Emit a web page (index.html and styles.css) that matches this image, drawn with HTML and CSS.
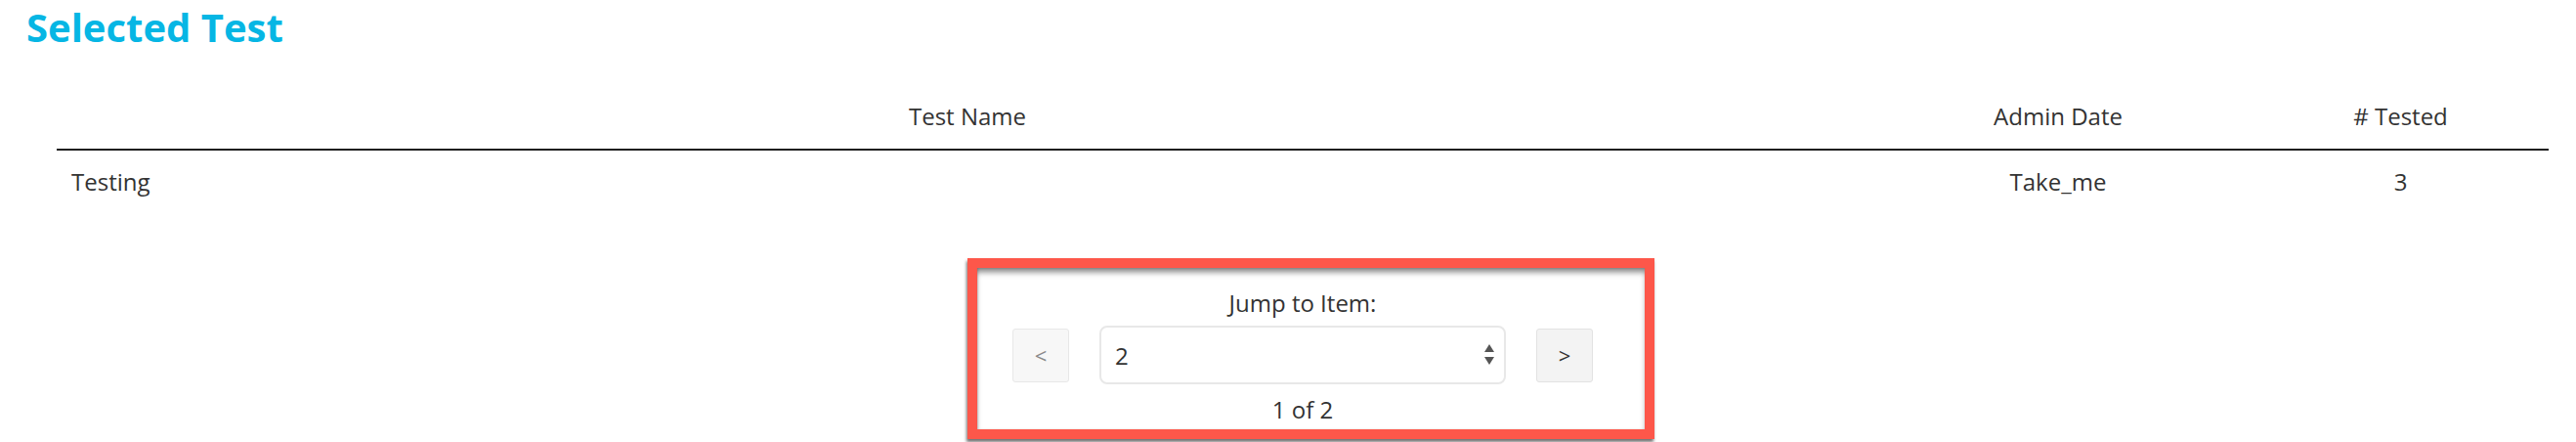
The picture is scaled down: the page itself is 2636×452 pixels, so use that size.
FILE: index.html
```html
<!DOCTYPE html>
<html lang="en">
<head>
    <meta charset="UTF-8">
    <meta name="viewport" content="width=device-width, initial-scale=1.0">
    <title>Selected Test</title>
    <link rel="stylesheet" href="styles.css">
</head>
<body>
    <div class="page">
        <h1 class="title">Selected Test</h1>

        <table class="test-table">
            <thead>
                <tr>
                    <th class="col-name">Test Name</th>
                    <th class="col-date">Admin Date</th>
                    <th class="col-count"># Tested</th>
                </tr>
            </thead>
            <tbody>
                <tr>
                    <td class="col-name left">Testing</td>
                    <td class="col-date">Take_me</td>
                    <td class="col-count">3</td>
                </tr>
            </tbody>
        </table>

        <div class="pager-wrap">
            <div class="pager">
                <!-- red annotation drawn over the pager -->
                <div class="highlight"></div>
                <div class="pager-label">Jump to Item:</div>
                <div class="pager-row">
                    <button class="nav-btn" disabled>&lt;</button>
                    <div class="select-box">
                        <span class="select-value">2</span>
                        <svg class="select-arrows" width="10" height="22" viewBox="0 0 10 22">
                            <polygon points="5,0 10,8 0,8" fill="#555"/>
                            <polygon points="0,13 10,13 5,21" fill="#555"/>
                        </svg>
                    </div>
                    <button class="nav-btn active">&gt;</button>
                </div>
                <div class="pager-count">1 of 2</div>
            </div>
        </div>
    </div>
</body>
</html>
```

FILE: styles.css
```css
body {
    margin: 0;
    padding: 0;
    background-color: #ffffff;
    font-family: "Open Sans", "Liberation Sans", sans-serif;
    color: #333333;
}
.page {
    width: 100%;
    height: 452px;
    overflow: hidden;
}
.title {
    margin: 0;
    padding: 0 0 0 27px;
    font-size: 40px;
    line-height: 56px;
    font-weight: 700;
    color: #06b6e4;
}
.test-table {
    margin: 28px 28px 0 58px;
    width: 2550px;
    border-collapse: separate;
    border-spacing: 0;
    font-size: 24px;
    line-height: 33px;
}
.test-table th {
    font-weight: 400;
    text-align: center;
    padding: 18px 15px 17px 15px;
    border-bottom: 2px solid #1e1e1e;
}
.test-table td {
    text-align: center;
    padding: 15px 15px;
}
.test-table .left {
    text-align: left;
}
.col-name {
    width: 1834px;
}
.col-date {
    width: 338px;
}
.test-table .col-count {
    padding-right: 0;
}
.pager-wrap {
    margin: 76px 28px 0 58px;
    display: flex;
    justify-content: center;
}
.pager {
    position: relative;
    display: flex;
    flex-direction: column;
    align-items: center;
    font-size: 24px;
    line-height: 33px;
}
.highlight {
    position: absolute;
    left: -46px;
    right: -63px;
    top: -29px;
    bottom: -14px;
    border: 10px solid #fd574a;
    box-shadow: -1px 3px 3px rgba(0, 0, 0, 0.55),
                inset 0 6px 6px -2px rgba(0, 0, 0, 0.5),
                inset 1px 0 2px rgba(0, 0, 0, 0.15);
    pointer-events: none;
}
.pager-label {
    margin-bottom: 7px;
}
.pager-row {
    display: flex;
    align-items: center;
    gap: 31px;
    margin-bottom: 9px;
}
.nav-btn {
    width: 58px;
    height: 55px;
    padding: 0;
    border: 1px solid #e8e8e8;
    border-radius: 3px;
    background-color: #f7f7f7;
    color: #8a8a8a;
    font-family: "Open Sans", "Liberation Sans", sans-serif;
    font-size: 22px;
}
.nav-btn.active {
    background-color: #f3f3f3;
    border-color: #e2e2e2;
    color: #333333;
}
.select-box {
    width: 388px;
    height: 56px;
    border: 2px solid #e8e8e8;
    border-radius: 8px;
    display: flex;
    align-items: center;
    justify-content: space-between;
    padding: 0 10px 0 14px;
}
.select-value {
    color: #333333;
}
.select-arrows {
    display: block;
}
.pager-count {
    color: #333333;
}
```
